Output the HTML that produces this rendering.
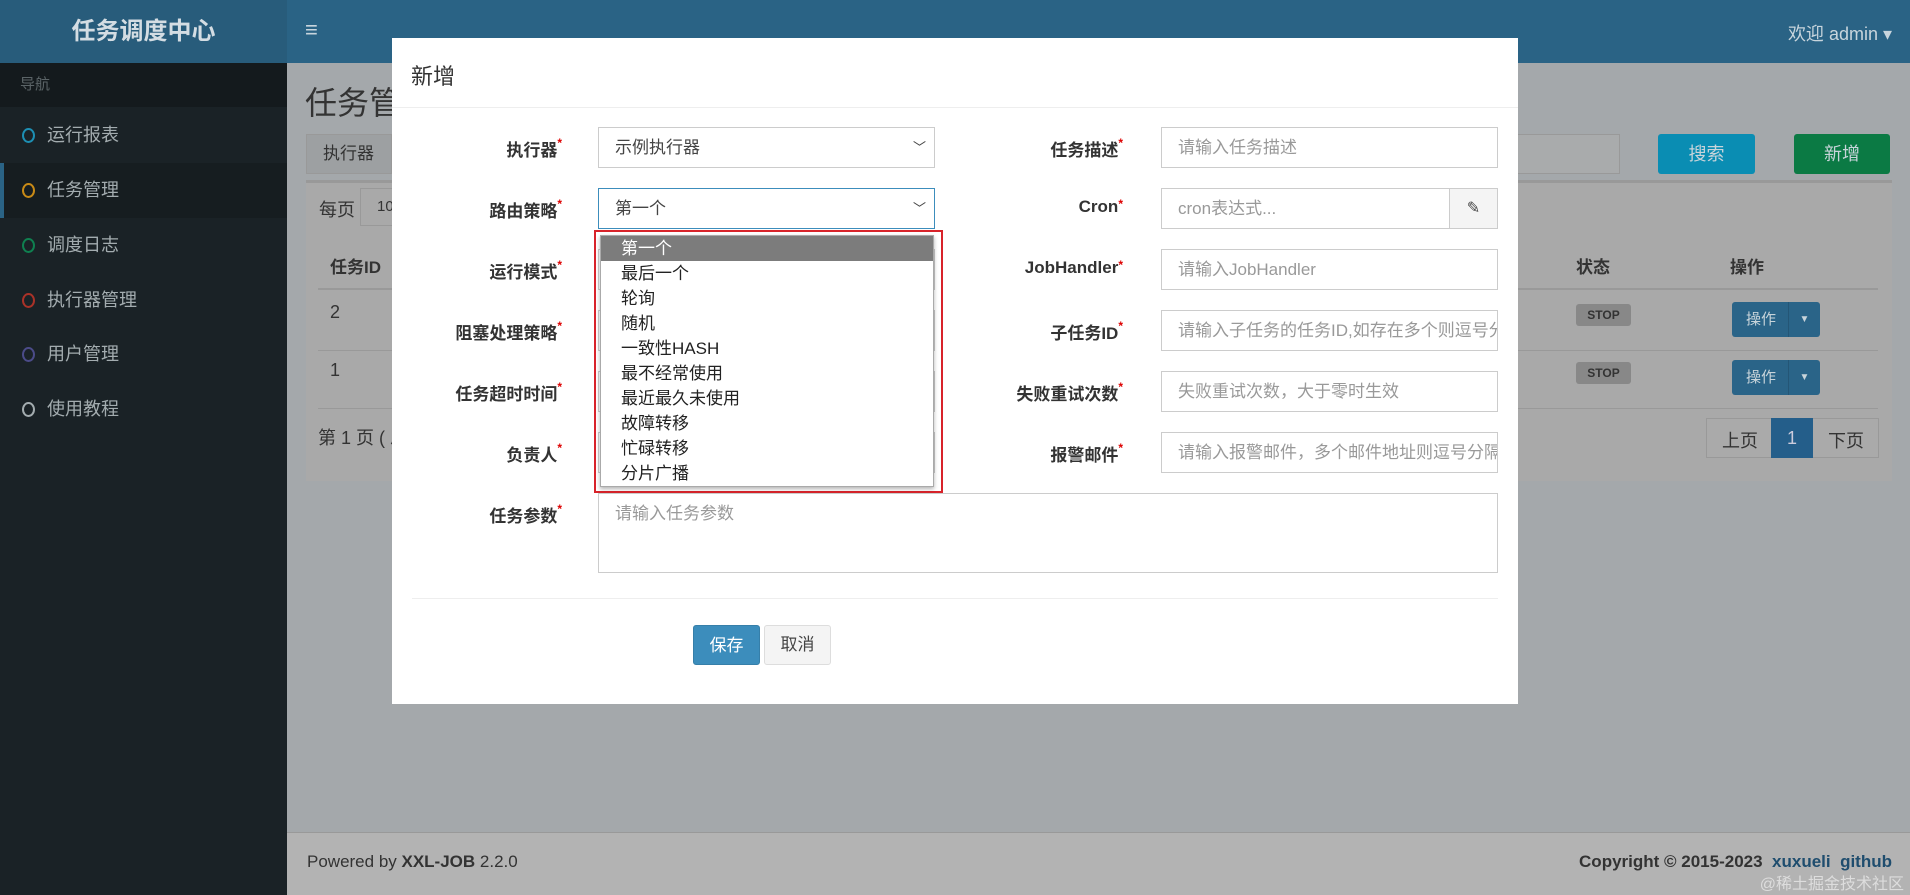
<!DOCTYPE html>
<html><head><meta charset="utf-8"><style>
*{box-sizing:border-box;margin:0;padding:0}
body{width:1910px;height:895px;overflow:hidden;position:relative;font-family:"Liberation Sans","Noto Sans CJK SC",sans-serif;background:#a4a8ab;color:#333}
.abs{position:absolute}
.hdr{left:0;top:0;width:1910px;height:63px;background:#2a6385}
.brand{left:0;top:0;width:287px;height:63px;background:#285c7b;color:#d4dde3;font-weight:bold;font-size:24px;text-align:center;line-height:63px}
.side{left:0;top:63px;width:287px;height:832px;background:#1a2226}
.navh{left:0;top:63px;width:287px;height:44px;background:#141a1d;color:#5b6467;font-size:15px;padding-left:20px;line-height:44px}
.item{left:0;width:287px;height:55px;color:#a3acaf;font-size:18px;line-height:55px;padding-left:47px}
.item i{position:absolute;left:22px;top:20px;width:13px;height:15px;border:2px solid;border-radius:50%}
.txt{font-size:18px}
.btn{color:#c8d4da;text-align:center;font-size:18px}
.modal{left:392px;top:38px;width:1126px;height:666px;background:#fff}
.lbl{font-size:17px;font-weight:bold;color:#333;text-align:right;width:200px}
.lbl b{color:#d00;font-size:12px;vertical-align:top}
.inp{border:1px solid #ccc;height:41px;font-size:17px;color:#999;padding-left:16px;line-height:39px;white-space:nowrap;overflow:hidden;background:#fff}
.dd{left:600px;top:235px;width:334px;height:252px;background:#fff;border:1px solid #aaa;box-shadow:0 2px 4px rgba(0,0,0,.3)}
.dd div{height:25px;line-height:25px;font-size:17px;padding-left:20px;color:#222}
</style></head><body>
<div class="abs hdr"></div>
<div class="abs brand">任务调度中心</div>
<div class="abs" style="left:305px;top:17px;color:#c8d5dd;font-size:22px">≡</div>
<div class="abs" style="right:18px;top:20px;color:#c8d5dd;font-size:18px">欢迎 admin ▾</div>
<div class="abs side"></div>
<div class="abs navh">导航</div>
<div class="abs item" style="top:108px"><i style="color:#1d8fb3"></i>运行报表</div>
<div class="abs item" style="top:163px;background:#161d20;border-left:4px solid #2a6385;padding-left:43px"><i style="color:#c88a16;left:18px"></i>任务管理</div>
<div class="abs item" style="top:218px"><i style="color:#0f8050"></i>调度日志</div>
<div class="abs item" style="top:273px"><i style="color:#a93228"></i>执行器管理</div>
<div class="abs item" style="top:327px"><i style="color:#4b4b88"></i>用户管理</div>
<div class="abs item" style="top:382px"><i style="color:#a3acaf"></i>使用教程</div>

<div class="abs" style="left:305px;top:78px;font-size:32px;color:#333">任务管理</div>
<div class="abs" style="left:306px;top:134px;width:86px;height:40px;background:#9da0a2;border:1px solid #999;font-size:17px;line-height:38px;padding-left:16px">执行器</div>
<div class="abs" style="left:392px;top:134px;width:1228px;height:40px;background:#a9abac;border:1px solid #999"></div>
<div class="abs btn" style="left:1658px;top:134px;width:97px;height:40px;background:#0a8db3;line-height:40px;border-radius:3px">搜索</div>
<div class="abs btn" style="left:1794px;top:134px;width:96px;height:40px;background:#0b7a44;line-height:40px;border-radius:3px">新增</div>
<div class="abs" style="left:306px;top:180px;width:1586px;height:301px;background:#a9a9a9;border-top:3px solid #999"></div>
<div class="abs txt" style="left:319px;top:196px">每页</div>
<div class="abs" style="left:360px;top:188px;width:40px;height:38px;border:1px solid #999;font-size:15px;line-height:36px;padding-left:16px">10</div>
<div class="abs" style="left:318px;top:240px;width:1560px;height:50px;border-bottom:2px solid #999"></div>
<div class="abs" style="left:318px;top:350px;width:1560px;height:1px;background:#999"></div>
<div class="abs" style="left:318px;top:408px;width:1560px;height:1px;background:#999"></div>
<div class="abs" style="left:330px;top:253px;font-size:17px;font-weight:bold">任务ID</div>
<div class="abs" style="left:1576px;top:253px;font-size:17px;font-weight:bold">状态</div>
<div class="abs" style="left:1730px;top:253px;font-size:17px;font-weight:bold">操作</div>
<div class="abs txt" style="left:330px;top:302px">2</div>
<div class="abs txt" style="left:330px;top:360px">1</div>
<div class="abs" style="left:1576px;top:304px;width:55px;height:22px;background:#888;font-size:12px;font-weight:bold;text-align:center;line-height:22px;border-radius:3px">STOP</div>
<div class="abs" style="left:1576px;top:362px;width:55px;height:22px;background:#888;font-size:12px;font-weight:bold;text-align:center;line-height:22px;border-radius:3px">STOP</div>
<div class="abs btn" style="left:1732px;top:302px;width:88px;height:35px;background:#2a6488;font-size:15px;line-height:35px;border-radius:3px;text-align:left;padding-left:14px">操作 <span style="position:absolute;left:56px;top:0;border-left:1px solid #245676;width:32px;text-align:center;font-size:10px">▼</span></div>
<div class="abs btn" style="left:1732px;top:360px;width:88px;height:35px;background:#2a6488;font-size:15px;line-height:35px;border-radius:3px;text-align:left;padding-left:14px">操作 <span style="position:absolute;left:56px;top:0;border-left:1px solid #245676;width:32px;text-align:center;font-size:10px">▼</span></div>
<div class="abs txt" style="left:318px;top:424px">第 1 页 ( 总</div>
<div class="abs" style="left:1706px;top:418px;width:173px;height:40px;border:1px solid #999;background:#aaa"></div>
<div class="abs txt" style="left:1722px;top:427px">上页</div>
<div class="abs" style="left:1771px;top:418px;width:42px;height:40px;background:#245e8a;color:#ccd;text-align:center;line-height:40px;font-size:18px">1</div>
<div class="abs txt" style="left:1828px;top:427px">下页</div>

<div class="abs" style="left:287px;top:832px;width:1623px;height:63px;background:#b3b3b3;border-top:1px solid #999"></div>
<div class="abs" style="left:307px;top:852px;font-size:17px">Powered by <b>XXL-JOB</b> 2.2.0</div>
<div class="abs" style="right:18px;top:852px;font-size:17px;font-weight:bold">Copyright © 2015-2023 &nbsp;<span style="color:#1f4d6e">xuxueli</span> &nbsp;<span style="color:#1f4d6e">github</span></div>
<div class="abs" style="right:6px;top:870px;font-size:16px;color:#ddd">@稀土掘金技术社区</div>

<div class="abs modal"></div>
<div class="abs" style="left:411px;top:59px;font-size:22px;color:#333">新增</div>
<div class="abs" style="left:392px;top:107px;width:1126px;height:1px;background:#eee"></div>

<div class="abs lbl" style="left:362px;top:136px">执行器<b>*</b></div>
<div class="abs lbl" style="left:362px;top:197px">路由策略<b>*</b></div>
<div class="abs lbl" style="left:362px;top:258px">运行模式<b>*</b></div>
<div class="abs lbl" style="left:362px;top:319px">阻塞处理策略<b>*</b></div>
<div class="abs lbl" style="left:362px;top:380px">任务超时时间<b>*</b></div>
<div class="abs lbl" style="left:362px;top:441px">负责人<b>*</b></div>
<div class="abs lbl" style="left:362px;top:502px">任务参数<b>*</b></div>
<div class="abs lbl" style="left:923px;top:136px">任务描述<b>*</b></div>
<div class="abs lbl" style="left:923px;top:197px">Cron<b>*</b></div>
<div class="abs lbl" style="left:923px;top:258px">JobHandler<b>*</b></div>
<div class="abs lbl" style="left:923px;top:319px">子任务ID<b>*</b></div>
<div class="abs lbl" style="left:923px;top:380px">失败重试次数<b>*</b></div>
<div class="abs lbl" style="left:923px;top:441px">报警邮件<b>*</b></div>

<div class="abs inp" style="left:598px;top:127px;width:337px;color:#444">示例执行器<span style="position:absolute;right:8px;font-size:13px">﹀</span></div>
<div class="abs inp" style="left:598px;top:188px;width:337px;color:#444;border-color:#3c8dbc">第一个<span style="position:absolute;right:8px;font-size:13px">﹀</span></div>
<div class="abs inp" style="left:598px;top:249px;width:337px"></div>
<div class="abs inp" style="left:598px;top:310px;width:337px"></div>
<div class="abs inp" style="left:598px;top:371px;width:337px"></div>
<div class="abs inp" style="left:598px;top:432px;width:337px"></div>
<div class="abs inp" style="left:598px;top:493px;width:900px;height:80px">请输入任务参数</div>
<div class="abs inp" style="left:1161px;top:127px;width:337px">请输入任务描述</div>
<div class="abs inp" style="left:1161px;top:188px;width:289px">cron表达式...</div>
<div class="abs" style="left:1449px;top:188px;width:49px;height:41px;background:#f4f4f4;border:1px solid #ccc;text-align:center;line-height:39px;font-size:16px;color:#444">✎</div>
<div class="abs inp" style="left:1161px;top:249px;width:337px">请输入JobHandler</div>
<div class="abs inp" style="left:1161px;top:310px;width:337px">请输入子任务的任务ID,如存在多个则逗号分隔</div>
<div class="abs inp" style="left:1161px;top:371px;width:337px">失败重试次数，大于零时生效</div>
<div class="abs inp" style="left:1161px;top:432px;width:337px">请输入报警邮件，多个邮件地址则逗号分隔</div>

<div class="abs" style="left:594px;top:230px;width:349px;height:263px;border:2px solid #d8232a"></div>
<div class="abs dd">
<div style="background:#7c7c7c;color:#fff">第一个</div><div>最后一个</div><div>轮询</div><div>随机</div><div>一致性HASH</div><div>最不经常使用</div><div>最近最久未使用</div><div>故障转移</div><div>忙碌转移</div><div>分片广播</div>
</div>

<div class="abs" style="left:412px;top:598px;width:1086px;height:1px;background:#eee"></div>
<div class="abs" style="left:693px;top:625px;width:67px;height:40px;background:#3c8dbc;color:#fff;font-size:17px;text-align:center;line-height:40px;border-radius:3px;border:1px solid #367fa9">保存</div>
<div class="abs" style="left:764px;top:625px;width:67px;height:40px;background:#f4f4f4;color:#444;font-size:17px;text-align:center;line-height:38px;border-radius:3px;border:1px solid #ddd">取消</div>
</body></html>
